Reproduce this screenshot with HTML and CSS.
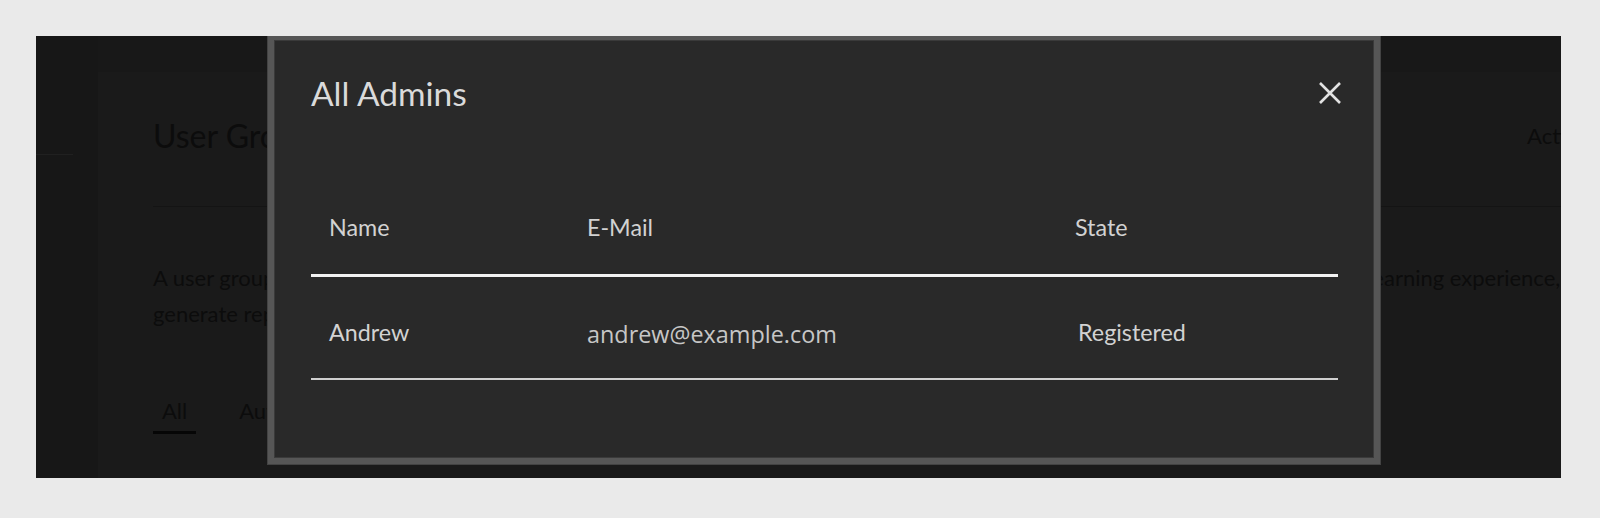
FILE: index.html
```html
<!DOCTYPE html>
<html lang="en">
<head>
<meta charset="utf-8">
<title>All Admins</title>
<link rel="stylesheet" href="styles.css">
</head>
<body>
<div class="frame">
  <div class="app">
    <aside class="sidebar">
      <div class="sidebar-top"></div>
      <div class="sidebar-divider"></div>
    </aside>
    <div class="main">
      <div class="topbar"></div>
      <section class="content">
        <div class="page-head">
          <h1 class="page-title">User Groups</h1>
          <span class="page-actions">Actions</span>
        </div>
        <p class="page-desc">A user group is a set of users that share the courses, content and permissions. Use groups to organize learners and shape their learning experience, and to<br>generate reports for each of your groups.</p>
        <nav class="tabs">
          <span class="tab tab-active">All</span>
          <span class="tab">Automatic</span>
          <span class="tab">Manual</span>
        </nav>
      </section>
    </div>
  </div>

  <div class="modal" role="dialog" aria-label="All Admins">
    <div class="modal-head">
      <h2 class="modal-title">All Admins</h2>
      <button class="modal-close" aria-label="Close">
        <svg width="24" height="24" viewBox="0 0 24 24"><path d="M2 2 L22 22 M22 2 L2 22" stroke="#e2e2e2" stroke-width="2.6" stroke-linecap="butt" fill="none"/></svg>
      </button>
    </div>
    <div class="table">
      <div class="row row-head">
        <div class="cell">Name</div>
        <div class="cell">E-Mail</div>
        <div class="cell">State</div>
      </div>
      <div class="row row-body">
        <div class="cell">Andrew</div>
        <div class="cell cell-mail">andrew@example.com</div>
        <div class="cell cell-state">Registered</div>
      </div>
    </div>
  </div>
</div>
</body>
</html>
```

FILE: styles.css
```css
* { box-sizing: border-box; }

html, body {
  margin: 0;
  padding: 0;
}

body {
  background: #eaeaea;
  padding: 36px 39px 40px 36px;
  font-family: Lato, "Open Sans", sans-serif;
}

.frame {
  position: relative;
  width: 1525px;
  height: 442px;
  overflow: hidden;
  background: #1a1a1a;
}

/* underlying (dimmed) page */
.app {
  display: flex;
  width: 1700px;
  height: 100%;
}

.sidebar {
  width: 62px;
  flex: none;
  background: #171717;
  display: flex;
  flex-direction: column;
}

.sidebar-top {
  height: 118px;
}

.sidebar-divider {
  width: 37px;
  height: 1px;
  background: #202020;
}

.main {
  flex: 1;
  min-width: 0;
  display: flex;
  flex-direction: column;
}

.topbar {
  height: 36px;
  background: #181818;
}

.content {
  padding: 44px 136px 0 55px;
  color: #0c0c0c;
}

.page-head {
  display: flex;
  justify-content: space-between;
  align-items: center;
  padding-bottom: 50px;
  border-bottom: 1px solid #141414;
}

.page-title {
  margin: 0;
  font-size: 32px;
  line-height: 40px;
  font-weight: 400;
}

.page-actions {
  font-size: 22px;
  line-height: 40px;
}

.page-desc {
  margin: 53px 0 0;
  font-size: 22px;
  line-height: 36px;
  white-space: nowrap;
}

.tabs {
  display: flex;
  gap: 34px;
  margin-top: 64px;
}

.tab {
  padding: 0 9px 5px;
  font-size: 22px;
  line-height: 30px;
  border-bottom: 3px solid transparent;
}

.tab-active {
  border-bottom-color: #060606;
}

/* modal */
.modal {
  position: absolute;
  left: 232px;
  top: -2px;
  width: 1112px;
  height: 430px;
  background: #292929;
  border: 6px solid #565656;
  box-shadow: inset 0 0 0 1px #3a3a3a, 0 0 0 1px #434343;
  padding: 36px 36px 0 37px;
}

.modal-head {
  display: flex;
  justify-content: space-between;
  align-items: center;
  height: 36px;
}

.modal-title {
  margin: 0;
  font-size: 33.5px;
  line-height: 36px;
  font-weight: 400;
  color: #dadada;
  position: relative;
  top: -1px;
}

.modal-close {
  width: 24px;
  height: 24px;
  margin-right: -4px;
  padding: 0;
  border: 0;
  background: none;
  display: flex;
  position: relative;
  top: -1px;
}

.table {
  margin-top: 68px;
}

.row {
  display: grid;
  grid-template-columns: 258px 488px 1fr;
  align-items: center;
}

.row-head {
  height: 97px;
  border-bottom: 3px solid #f2f2f2;
}

.row-body {
  height: 103px;
  padding-top: 8px;
  border-bottom: 2px solid #cfcfcf;
}

.cell {
  padding: 0 18px;
  font-size: 23.3px;
  line-height: 30px;
  color: #d2d2d2;
}

.cell-mail {
  font-family: "Open Sans", sans-serif;
  font-size: 23.4px;
  color: #c6c6c6;
  padding-top: 4px;
}

.cell-state {
  padding-left: 21px;
}
```
